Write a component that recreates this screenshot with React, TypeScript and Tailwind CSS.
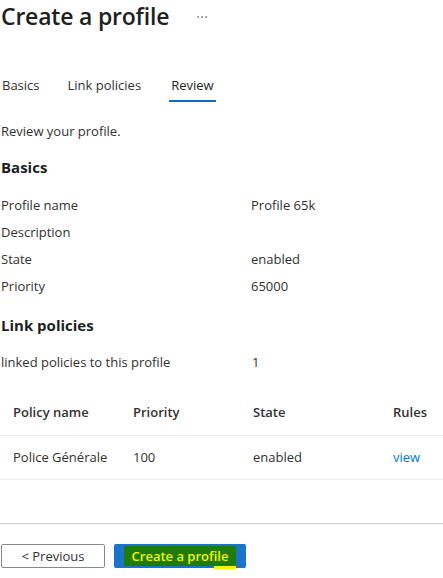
import { MoreHorizontal } from "lucide-react";

const basics = [
  { label: "Profile name", value: "Profile 65k" },
  { label: "Description", value: "" },
  { label: "State", value: "enabled" },
  { label: "Priority", value: "65000" },
];

const tabs = ["Basics", "Link policies", "Review"];

export default function App() {
  return (
    <div
      className="flex h-[578px] w-[443px] flex-col overflow-hidden bg-white pl-[1px] text-[13px] text-[#323130]"
      style={{ fontFamily: '"Open Sans", "Noto Sans", sans-serif' }}
    >
      <div className="flex h-[32px] items-center">
        <h1 className="text-[23px] font-semibold leading-[32px] tracking-[-0.2px] text-[#201f1e]">
          Create a profile
        </h1>
        <MoreHorizontal className="ml-[26px] mt-[2px] text-[#605e5c]" size={14} strokeWidth={1} />
      </div>

      <div className="mt-[38px] flex pl-[1px]">
        {tabs.map((tab) => (
          <div
            key={tab}
            className={
              tab === "Review"
                ? "mr-[28px] h-[32px] border-b-2 border-[#0f6cbd] px-[2px] leading-[30px] text-[#201f1e]"
                : "mr-[28px] h-[32px] leading-[30px]"
            }
          >
            {tab}
          </div>
        ))}
      </div>

      <div className="mt-[19px] leading-[20px]">Review your profile.</div>

      <h2 className="mt-[16px] text-[15px] font-bold leading-[20px] text-[#201f1e]">Basics</h2>

      <div className="mt-[15px] flex flex-col">
        {basics.map((row) => (
          <div key={row.label} className="grid h-[27px] grid-cols-[250px_1fr] items-center">
            <span>{row.label}</span>
            <span>{row.value}</span>
          </div>
        ))}
      </div>

      <h2 className="mt-[15px] text-[15px] font-bold leading-[20px] text-[#201f1e]">
        Link policies
      </h2>

      <div className="mt-[18px] grid h-[20px] grid-cols-[251px_1fr] items-center">
        <span>linked policies to this profile</span>
        <span>1</span>
      </div>

      <div className="mt-[18px] -ml-[1px] flex flex-col">
        <div className="grid h-[45px] grid-cols-[120px_120px_140px_1fr] items-center border-b border-[#edebe9] pl-[13px] font-semibold">
          <span>Policy name</span>
          <span>Priority</span>
          <span>State</span>
          <span>Rules</span>
        </div>
        <div className="grid h-[44px] grid-cols-[120px_120px_140px_1fr] items-center border-b border-[#edebe9] pl-[13px]">
          <span>Police Générale</span>
          <span>100</span>
          <span>enabled</span>
          <span className="text-[#0078d4]">view</span>
        </div>
      </div>

      <div className="mt-[43px] -ml-[1px] border-t border-[#d2d0ce]" />

      <div className="mt-[20px] flex gap-[9px]">
        <button className="h-[24px] w-[104px] rounded-[2px] border border-[#8a8886] bg-white leading-[22px] text-[#323130]">
          &lt; Previous
        </button>
        <button className="relative flex h-[24px] w-[132px] items-center justify-center rounded-[2px] bg-[#1a73c8]">
          <span className="relative rounded-[2px] bg-[#1e7d06] px-[8px] leading-[20px] font-semibold text-[#f5f500]">
            Create a profile
            <span className="absolute bottom-[-3px] right-[0px] h-[3px] w-[22px] bg-[#f5f500]" />
          </span>
        </button>
      </div>
    </div>
  );
}
